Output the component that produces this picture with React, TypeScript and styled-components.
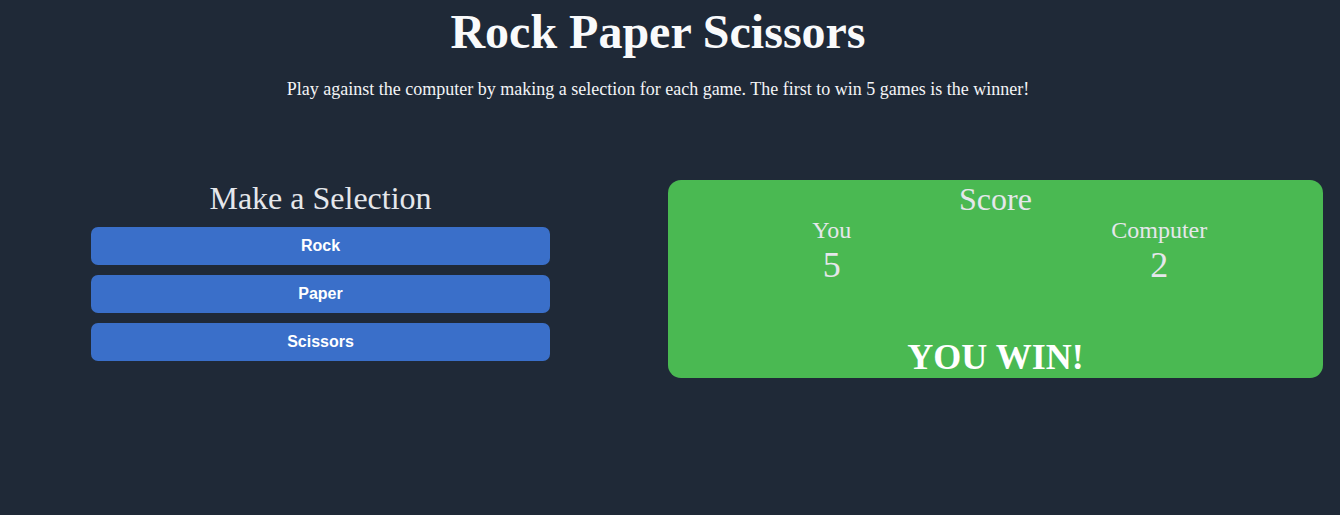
import React from "react";
import styled, { createGlobalStyle } from "styled-components";

const GlobalStyle = createGlobalStyle`
  html, body {
    margin: 0;
    padding: 0;
    background: #1f2937;
  }
  body {
    font-family: "Liberation Serif", "Times New Roman", serif;
    color: #e5e7eb;
    min-height: 515px;
  }
`;

const Page = styled.div`
  padding: 0 8px;
  display: flex;
  flex-direction: column;
`;

const Header = styled.header`
  display: flex;
  flex-direction: column;
  align-items: center;
  padding-right: 24px;
`;

const Title = styled.h1`
  margin: 2px 0 0;
  font-size: 48px;
  line-height: 60px;
  font-weight: bold;
  color: #f9fafb;
`;

const Intro = styled.p`
  margin: 17px 0 0;
  font-size: 18px;
  line-height: 21px;
  color: #f3f4f6;
`;

const Board = styled.div`
  margin-top: 80px;
  display: flex;
  align-items: flex-start;
  padding-left: 83px;
  gap: 118px;
`;

const SelectionColumn = styled.section`
  width: 459px;
  flex-shrink: 0;
  display: flex;
  flex-direction: column;
  align-items: stretch;
  gap: 10px;
`;

const SectionHeading = styled.h2`
  margin: 0;
  font-size: 32px;
  font-weight: normal;
  line-height: 37px;
  text-align: center;
  color: #e5e7eb;
`;

const ChoiceButton = styled.button`
  height: 38px;
  border: none;
  border-radius: 7px;
  background: #3a6fc9;
  color: #ffffff;
  font-family: "Liberation Sans", Arial, sans-serif;
  font-weight: bold;
  font-size: 16px;
  cursor: pointer;
`;

const ScoreCard = styled.section`
  width: 655px;
  flex-shrink: 0;
  height: 198px;
  border-radius: 13px;
  background: #4ab952;
  display: flex;
  flex-direction: column;
  align-items: center;
  box-sizing: border-box;
  padding-top: 1px;
`;

const ScoreRow = styled.div`
  align-self: stretch;
  display: grid;
  grid-template-columns: 1fr 1fr;
`;

const Player = styled.div`
  display: flex;
  flex-direction: column;
  align-items: center;
`;

const PlayerName = styled.div`
  font-size: 24px;
  line-height: 28px;
  margin-top: -2px;
`;

const PlayerScore = styled.div`
  font-size: 36px;
  line-height: 42px;
`;

const Result = styled.div`
  margin-top: auto;
  font-size: 36px;
  font-weight: bold;
  line-height: 36px;
  color: #ffffff;
  margin-bottom: 3px;
`;

export default function App() {
  return (
    <>
      <GlobalStyle />
      <Page>
        <Header>
          <Title>Rock Paper Scissors</Title>
          <Intro>
            Play against the computer by making a selection for each game. The
            first to win 5 games is the winner!
          </Intro>
        </Header>
        <Board>
          <SelectionColumn>
            <SectionHeading>Make a Selection</SectionHeading>
            <ChoiceButton>Rock</ChoiceButton>
            <ChoiceButton>Paper</ChoiceButton>
            <ChoiceButton>Scissors</ChoiceButton>
          </SelectionColumn>
          <ScoreCard>
            <SectionHeading>Score</SectionHeading>
            <ScoreRow>
              <Player>
                <PlayerName>You</PlayerName>
                <PlayerScore>5</PlayerScore>
              </Player>
              <Player>
                <PlayerName>Computer</PlayerName>
                <PlayerScore>2</PlayerScore>
              </Player>
            </ScoreRow>
            <Result>YOU WIN!</Result>
          </ScoreCard>
        </Board>
      </Page>
    </>
  );
}
